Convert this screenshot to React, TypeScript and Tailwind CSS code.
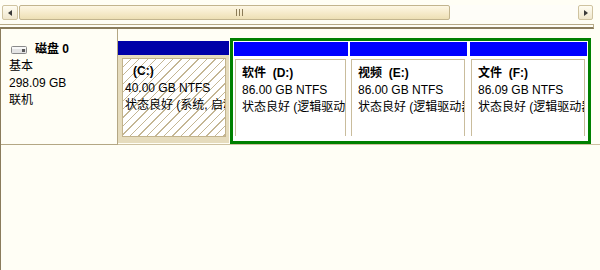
const font = "font-['Liberation_Sans','Noto_Sans_CJK_SC',sans-serif]";

function DiskIcon() {
  return (
    <svg width="16" height="8" viewBox="0 0 16 8">
      <rect x="0.5" y="0.5" width="15" height="7" rx="1" fill="#e4e4e4" stroke="#8a8a8a" />
      <rect x="1" y="1" width="14" height="2" fill="#f8f8f8" />
      <rect x="11" y="3" width="3" height="3" fill="#5a5a5a" />
    </svg>
  );
}

function Partition({
  label,
  drive,
  size,
  status,
  width,
  className = "",
}: {
  label: string;
  drive: string;
  size: string;
  status: string;
  width: string;
  className?: string;
}) {
  return (
    <div className={`flex flex-col ${width} ${className}`}>
      <div className="h-[14px] bg-[#0000ff]" />
      <div className="flex-1 bg-white pl-[1px] pr-[2px] pt-[3px] pb-[4px]">
        <div className="h-full border-l border-t border-r border-[#c9bc9c] pl-[6px] pt-[5px] overflow-hidden whitespace-nowrap leading-[17px]">
          <div className="font-bold whitespace-pre">
            {label}
            {"  "}
            {drive}
          </div>
          <div>{size}</div>
          <div>{status}</div>
        </div>
      </div>
    </div>
  );
}

export default function App() {
  return (
    <div className={`w-[600px] h-[270px] overflow-hidden bg-[#fffef5] text-[12px] text-black ${font}`}>
      {/* horizontal scrollbar */}
      <div className="h-[24px] flex items-start pt-[5px] pl-[2px]">
        <div className="w-[16px] h-[15px] rounded-[2px] border border-[#cfc3a0] bg-gradient-to-b from-[#fffdf2] to-[#efe6cc] flex items-center justify-center">
          <svg width="5" height="6" viewBox="0 0 5 6">
            <path d="M4 0 L0 3 L4 6 Z" fill="#3a3a3a" />
          </svg>
        </div>
        <div className="ml-[1px] w-[559px] h-[15px] bg-[#fefdf8] flex">
          <div className="w-[431px] h-[15px] rounded-[2px] border border-[#c2b48e] bg-gradient-to-b from-[#fdf7e4] via-[#f6ebcc] to-[#eddfb4] flex items-center justify-center">
            <div className="flex gap-[2px] ml-[10px]">
              <div className="w-[1px] h-[7px] bg-[#8c7c58]" />
              <div className="w-[1px] h-[7px] bg-[#8c7c58]" />
              <div className="w-[1px] h-[7px] bg-[#8c7c58]" />
            </div>
          </div>
        </div>
        <div className="w-[15px] h-[15px] rounded-[2px] border border-[#cfc3a0] bg-gradient-to-b from-[#fffdf2] to-[#efe6cc] flex items-center justify-center">
          <svg width="5" height="6" viewBox="0 0 5 6">
            <path d="M1 0 L5 3 L1 6 Z" fill="#3a3a3a" />
          </svg>
        </div>
      </div>
      <div className="h-[5px] mr-[6px] border-t border-r border-[#b8ab88] border-b-2 border-b-[#8a7c5c]" />

      {/* disk row */}
      <div className="h-full border-l border-[#8a7c5c] flex items-start">
        <div className="w-[117px] h-[116px] border-r border-b border-[#b4a784] pl-[8px] pt-[12px] leading-[17px]">
          <div className="flex items-center gap-[8px] pl-[2px]">
            <DiskIcon />
            <span className="font-bold">磁盘 0</span>
          </div>
          <div>基本</div>
          <div>298.09 GB</div>
          <div>联机</div>
        </div>

        <div className="flex-1 h-[116px] border-b border-[#cdc1a0] flex items-start">
          {/* system partition */}
          <div className="w-[111px] mt-[12px] flex flex-col">
            <div className="h-[14px] bg-[#0000a8]" />
            <div className="h-[88px] bg-[#e6dcbd] pl-[4px] pr-[3px] pt-[3px] pb-[6px]">
              <div className="h-full border border-[#c2b38c] bg-white bg-[repeating-linear-gradient(135deg,transparent_0_5px,#c4b694_5px_6px)] pl-[2px] pt-[4px] leading-[17px] whitespace-nowrap overflow-hidden">
                <div className="font-bold pl-[8px]">(C:)</div>
                <div>40.00 GB NTFS</div>
                <div>状态良好 (系统, 启动, 页面文件)</div>
              </div>
            </div>
          </div>

          {/* extended partition, selected */}
          <div className="ml-[1px] mt-[9px] w-[361px] h-[106px] border-[3px] border-[#008000] bg-white p-[1px] flex">
            <Partition label="软件" drive="(D:)" size="86.00 GB NTFS" status="状态良好 (逻辑驱动器)" width="w-[114px]" />
            <Partition label="视频" drive="(E:)" size="86.00 GB NTFS" status="状态良好 (逻辑驱动器)" width="w-[117px]" className="ml-[2px]" />
            <Partition label="文件" drive="(F:)" size="86.09 GB NTFS" status="状态良好 (逻辑驱动器)" width="w-[117px]" className="ml-[3px]" />
          </div>
        </div>
      </div>
    </div>
  );
}
